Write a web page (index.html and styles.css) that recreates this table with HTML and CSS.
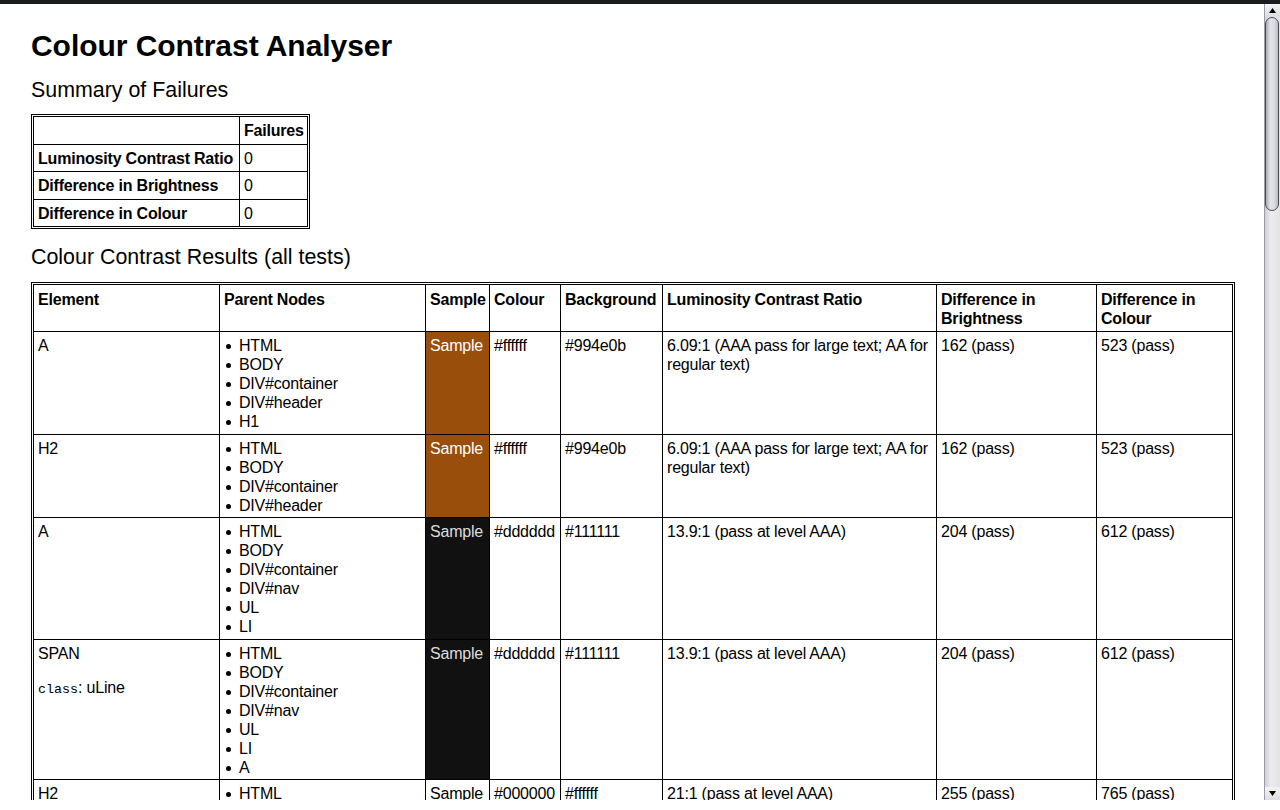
FILE: index.html
```html
<!DOCTYPE html>
<html lang="en">
<head>
<meta charset="utf-8">
<title>Colour Contrast Analyser</title>
<link rel="stylesheet" href="styles.css">
</head>
<body>
<div class="topbar"></div>
<div class="window">
  <div class="page">
    <h1>Colour Contrast Analyser</h1>
    <h2 class="h-summary">Summary of Failures</h2>
    <div class="frame frame-fit">
      <table class="summary">
        <colgroup><col class="sc1"><col class="sc2"></colgroup>
        <tr><th></th><th>Failures</th></tr>
        <tr><th>Luminosity Contrast Ratio</th><td>0</td></tr>
        <tr><th>Difference in Brightness</th><td>0</td></tr>
        <tr><th>Difference in Colour</th><td>0</td></tr>
      </table>
    </div>
    <h2 class="h-results">Colour Contrast Results (all tests)</h2>
    <div class="frame">
      <table class="results">
        <colgroup>
          <col class="c-el"><col class="c-par"><col class="c-sam"><col class="c-col"><col class="c-bg"><col class="c-lum"><col class="c-bri"><col class="c-dif">
        </colgroup>
        <tr class="head">
          <th>Element</th><th>Parent Nodes</th><th>Sample</th><th>Colour</th><th>Background</th><th>Luminosity Contrast Ratio</th><th>Difference in Brightness</th><th>Difference in Colour</th>
        </tr>
        <tr>
          <td>A</td>
          <td><ul><li>HTML</li><li>BODY</li><li>DIV#container</li><li>DIV#header</li><li>H1</li></ul></td>
          <td class="s-brown">Sample</td>
          <td>#ffffff</td><td>#994e0b</td>
          <td>6.09:1 (AAA pass for large text; AA for regular text)</td>
          <td>162 (pass)</td><td>523 (pass)</td>
        </tr>
        <tr class="tight">
          <td>H2</td>
          <td><ul><li>HTML</li><li>BODY</li><li>DIV#container</li><li>DIV#header</li></ul></td>
          <td class="s-brown">Sample</td>
          <td>#ffffff</td><td>#994e0b</td>
          <td>6.09:1 (AAA pass for large text; AA for regular text)</td>
          <td>162 (pass)</td><td>523 (pass)</td>
        </tr>
        <tr>
          <td>A</td>
          <td><ul><li>HTML</li><li>BODY</li><li>DIV#container</li><li>DIV#nav</li><li>UL</li><li>LI</li></ul></td>
          <td class="s-dark">Sample</td>
          <td>#dddddd</td><td>#111111</td>
          <td>13.9:1 (pass at level AAA)</td>
          <td>204 (pass)</td><td>612 (pass)</td>
        </tr>
        <tr class="tight">
          <td>SPAN<div class="attr"><code>class</code>: uLine</div></td>
          <td><ul><li>HTML</li><li>BODY</li><li>DIV#container</li><li>DIV#nav</li><li>UL</li><li>LI</li><li>A</li></ul></td>
          <td class="s-dark">Sample</td>
          <td>#dddddd</td><td>#111111</td>
          <td>13.9:1 (pass at level AAA)</td>
          <td>204 (pass)</td><td>612 (pass)</td>
        </tr>
        <tr>
          <td>H2</td>
          <td><ul><li>HTML</li><li>BODY</li><li>DIV#container</li><li>DIV#content</li></ul></td>
          <td class="s-light">Sample</td>
          <td>#000000</td><td>#ffffff</td>
          <td>21:1 (pass at level AAA)</td>
          <td>255 (pass)</td><td>765 (pass)</td>
        </tr>
      </table>
    </div>
  </div>
  <div class="scrollbar">
    <div class="sb-btn"><svg width="7" height="5" viewBox="0 0 7 5"><path d="M3.5 0L7 5H0z" fill="#000"/></svg></div>
    <div class="sb-thumb"></div>
    <div class="sb-track"></div>
    <div class="sb-btn"><svg width="7" height="5" viewBox="0 0 7 5"><path d="M0 0H7L3.5 5z" fill="#000"/></svg></div>
  </div>
</div>
</body>
</html>
```
FILE: styles.css
```css
html, body {
  margin: 0;
  padding: 0;
  background: #fff;
}
body {
  font-family: "Liberation Sans", Arial, sans-serif;
  font-size: 16px;
  color: #000;
  overflow: hidden;
}
.topbar {
  height: 4px;
  background: #1b1c1f;
}
.window {
  display: flex;
  height: 796px;
}
.page {
  flex: 1;
  min-width: 0;
  padding: 0 29px 0 31px;
  overflow: hidden;
}
h1 {
  font-size: 30px;
  line-height: 34px;
  font-weight: bold;
  letter-spacing: -0.05px;
  margin: 25px 0 0;
}
h2 {
  font-size: 21.4px;
  line-height: 24px;
  font-weight: normal;
  margin: 0;
}
.h-summary {
  margin: 15px 0 12px;
}
.h-results {
  margin: 16px 0 13px;
}
.frame {
  border: 1px solid #000;
  padding: 1px;
}
.frame-fit {
  width: fit-content;
}
table {
  border-collapse: collapse;
  table-layout: fixed;
}
th, td {
  border: 1px solid #000;
  padding: 4px 4px 3px;
  line-height: 19px;
  font-size: 16px;
  text-align: left;
  vertical-align: top;
  letter-spacing: -0.2px;
}
th {
  font-weight: bold;
}
.summary {
  width: 275px;
}
.summary th, .summary td {
  padding-bottom: 3.5px;
}
.sc1 { width: 206px; }
.sc2 { width: 68px; }
.results {
  width: 1200px;
}
.results .head th {
  padding-top: 5px;
}
.results .tight td {
  padding-bottom: 2px;
}
.c-el { width: 186px; }
.c-par { width: 206px; }
.c-sam { width: 64px; }
.c-col { width: 71px; }
.c-bg { width: 102px; }
.c-lum { width: 274px; }
.c-bri { width: 160px; }
.c-dif { width: 136px; }
ul {
  margin: 0;
  padding-left: 15px;
  list-style: none;
}
li::before {
  content: "";
  display: inline-block;
  width: 5px;
  height: 5px;
  border-radius: 50%;
  background: #000;
  margin: 0 8px 2px -13px;
}
.attr {
  margin-top: 15px;
}
.attr code {
  font-family: "Liberation Mono", "Courier New", monospace;
  font-size: 13.33px;
  letter-spacing: 0;
}
.s-brown {
  background: #994e0b;
  color: #ffffff;
}
.s-dark {
  background: #111111;
  color: #dddddd;
}
.s-light {
  background: #ffffff;
  color: #000000;
}
.scrollbar {
  width: 15px;
  border-left: 1px solid #9c9ca6;
  background: linear-gradient(to right, #cfcfd6, #ececf0 40%, #e2e2e8);
  display: flex;
  flex-direction: column;
}
.sb-btn {
  height: 13px;
  flex: none;
  display: flex;
  align-items: center;
  justify-content: center;
  background: linear-gradient(to bottom, #f4f4f6, #dcdce2);
}
.sb-btn svg {
  display: block;
}
.sb-thumb {
  flex: none;
  height: 192px;
  margin: 0 1px 0 0;
  border: 1px solid #4b4b56;
  border-radius: 7px;
  background: linear-gradient(to right, #a9a9b3, #e3e3e9 35%, #dadae1 70%, #b9b9c2);
}
.sb-track {
  flex: 1;
}
```
